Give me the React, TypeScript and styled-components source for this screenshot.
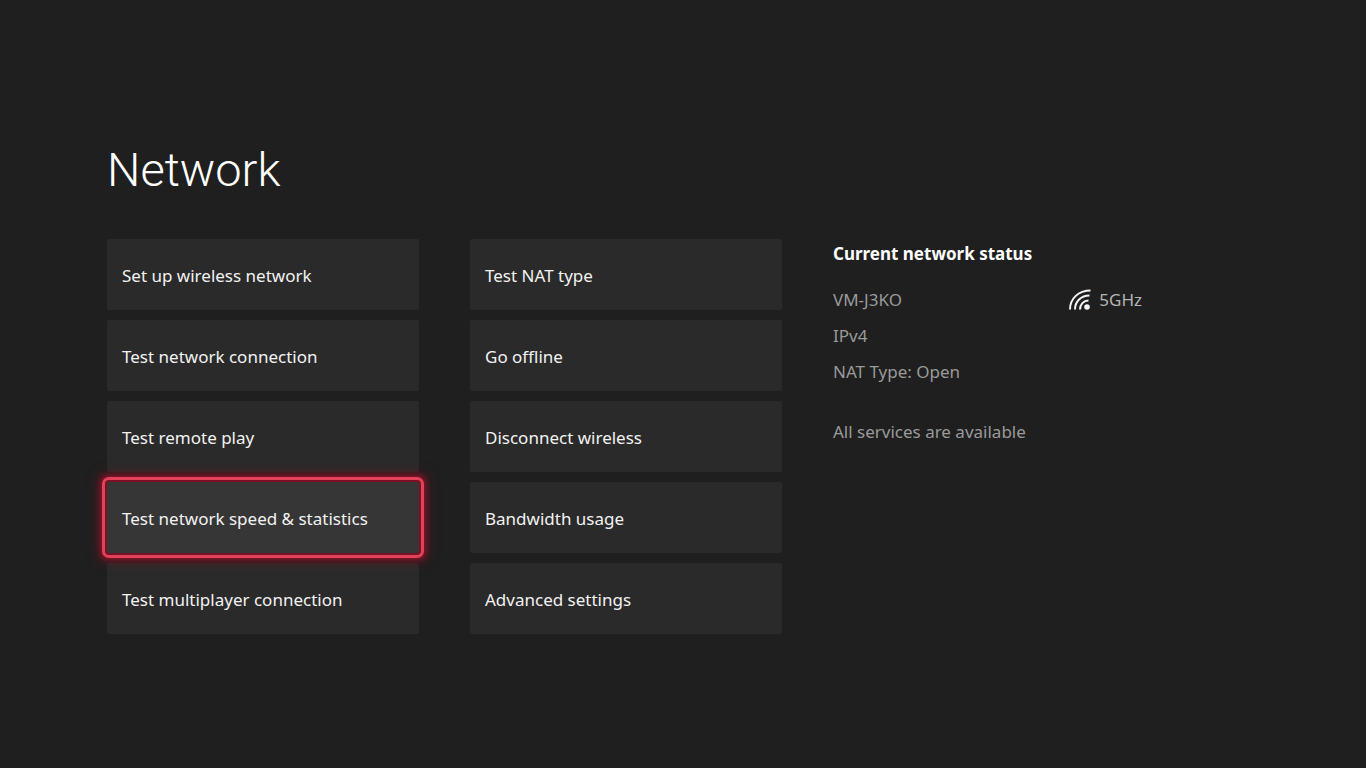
import React from 'react';
import styled, { createGlobalStyle } from 'styled-components';

const GlobalStyle = createGlobalStyle`
  * { box-sizing: border-box; }
  body {
    margin: 0;
    background: #1f1f1f;
    color: #f2f2f2;
    font-family: "Noto Sans", "Open Sans", sans-serif;
    font-size: 17px;
    line-height: 24px;
  }
`;

const Page = styled.main`
  min-height: 100vh;
  padding: 142px 221px 48px 107px;
`;

const Title = styled.h1`
  margin: 0 0 41px;
  font-family: Roboto, sans-serif;
  font-size: 47px;
  font-weight: 300;
  line-height: 56px;
  color: #ffffff;
`;

const Columns = styled.div`
  display: grid;
  grid-template-columns: repeat(3, minmax(0, 1fr));
  column-gap: 51px;
  align-items: start;
`;

const Menu = styled.nav`
  display: grid;
  gap: 10px;
`;

const Tile = styled.button<{ $focused?: boolean }>`
  min-height: 71px;
  padding: 2px 15px 0;
  border: 0;
  border-radius: 2px;
  background: ${(p) => (p.$focused ? '#363636' : '#2a2a2a')};
  color: inherit;
  font: inherit;
  text-align: left;
  outline: ${(p) => (p.$focused ? '3px solid #e0425a' : 'none')};
  outline-offset: 2px;
  box-shadow: ${(p) =>
    p.$focused ? '0 0 0 2px #7a1023, 0 0 6px 6px #a00f28, 0 0 14px 8px rgba(160, 15, 40, 0.35)' : 'none'};
  position: relative;
  z-index: ${(p) => (p.$focused ? 1 : 0)};
`;

const Status = styled.section`
  padding-top: 3px;
  color: #9a9a9a;
`;

const StatusTitle = styled.h2`
  margin: 0 0 22px;
  font-size: 17px;
  font-weight: 700;
  line-height: 24px;
  color: #ffffff;
`;

const StatusRow = styled.div`
  display: flex;
  justify-content: space-between;
  padding-right: 3px;
`;

const StatusLine = styled.p<{ $spaced?: boolean }>`
  margin: ${(p) => (p.$spaced ? '36px' : '12px')} 0 0;
`;

const Band = styled.span`
  display: flex;
  align-items: center;
  gap: 8px;
  color: #b4b4b4;
`;

const SignalIcon = () => (
  <svg width="22" height="22" viewBox="0 0 22 22" fill="none" stroke="#f4f4f4" strokeWidth="2" aria-hidden="true">
    <path d="M1 20.500C1 9.500 9.500 1.500 21.500 1.500" />
    <path d="M6 20.500C6 12.500 12 6.500 20.500 6.500" />
    <path d="M11 20.500C11 15.500 14.500 11.500 19.500 11.500" />
    <circle cx="18" cy="18" r="2.800" fill="#f4f4f4" stroke="none" />
  </svg>
);

const setupItems = [
  'Set up wireless network',
  'Test network connection',
  'Test remote play',
  'Test network speed & statistics',
  'Test multiplayer connection',
];

const optionItems = ['Test NAT type', 'Go offline', 'Disconnect wireless', 'Bandwidth usage', 'Advanced settings'];

const focusedItem = 'Test network speed & statistics';

const TileMenu = ({ label, items }: { label: string; items: string[] }) => (
  <Menu aria-label={label}>
    {items.map((item) => (
      <Tile key={item} type="button" $focused={item === focusedItem}>
        {item}
      </Tile>
    ))}
  </Menu>
);

export default function App() {
  return (
    <Page>
      <GlobalStyle />
      <Title>Network</Title>
      <Columns>
        <TileMenu label="Setup and tests" items={setupItems} />
        <TileMenu label="Options" items={optionItems} />
        <Status>
          <StatusTitle>Current network status</StatusTitle>
          <StatusRow>
            <span>VM-J3KO</span>
            <Band>
              <SignalIcon />
              5GHz
            </Band>
          </StatusRow>
          <StatusLine>IPv4</StatusLine>
          <StatusLine>NAT Type: Open</StatusLine>
          <StatusLine $spaced>All services are available</StatusLine>
        </Status>
      </Columns>
    </Page>
  );
}
